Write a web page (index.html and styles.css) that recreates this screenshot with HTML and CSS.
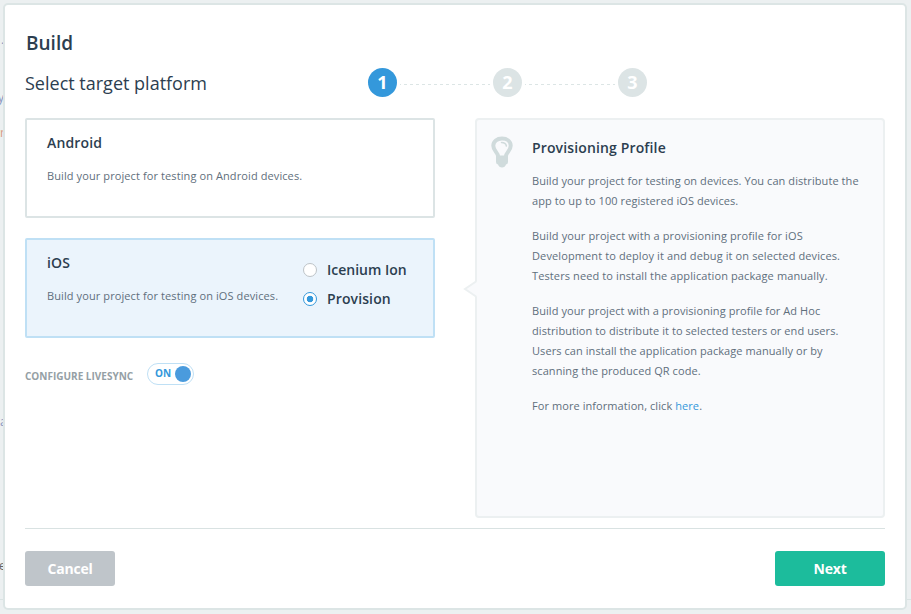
FILE: index.html
```html
<!DOCTYPE html>
<html lang="en">
<head>
<meta charset="utf-8">
<title>Build</title>
<link rel="stylesheet" href="styles.css">
</head>
<body>
<div class="backdrop" aria-hidden="true">
  <span class="peek peek-dot">.</span>
  <span class="peek peek-y">y</span>
  <span class="peek peek-r">r</span>
  <span class="peek peek-a">a</span>
  <span class="peek peek-e">e</span>
</div>
<main class="dialog">
  <h1 class="title">Build</h1>
  <header class="wizard">
    <h2 class="subtitle">Select target platform</h2>
    <div class="steps">
      <span class="step active">1</span>
      <svg class="track" width="90" height="1"><path d="M0 .5H90"/></svg>
      <span class="step">2</span>
      <svg class="track" width="90" height="1"><path d="M0 .5H90"/></svg>
      <span class="step">3</span>
    </div>
  </header>
  <div class="columns">
    <section class="platforms">
      <div class="card">
        <div class="card-text">
          <h3>Android</h3>
          <p>Build your project for testing on Android devices.</p>
        </div>
      </div>
      <div class="card selected">
        <div class="card-text">
          <h3>iOS</h3>
          <p>Build your project for testing on iOS devices.</p>
        </div>
        <div class="options">
          <div class="option"><span class="radio"></span><span>Icenium Ion</span></div>
          <div class="option"><span class="radio checked"></span><span class="provision">Provision</span></div>
        </div>
      </div>
      <div class="livesync">
        <span class="livesync-label">CONFIGURE LIVESYNC</span>
        <span class="toggle"><span class="toggle-text">ON</span><span class="knob"></span></span>
      </div>
    </section>
    <aside class="info">
      <svg class="arrow" width="14" height="18" viewBox="0 0 14 18"><path class="arrow-fill" d="M14 1.5L2 9l12 7.5z"/><path class="arrow-line" d="M13 1.5L2 9l11 7.5"/></svg>
      <svg class="bulb" width="22" height="32" viewBox="0 0 22 32">
        <path class="glass" d="M7 20C6.800 16.500 2.300 14.700 2.300 9.800C2.300 5.400 6 2.500 11 2.500s8.700 2.900 8.700 7.300c0 4.900-4.500 6.700-4.700 10.200"/>
        <path class="base" d="M5 19.500h12v6.500q0 2-2 2.500-1 3-4 3t-4-3q-2-.5-2-2.500z"/>
        <path class="shine" d="M10.500 6.600q4.200 0 4.900 3.400"/>
      </svg>
      <div class="info-body">
        <h3>Provisioning Profile</h3>
        <p>Build your project for testing on devices. You can distribute the<br>app to up to 100 registered iOS devices.</p>
        <p class="loose">Build your project with a provisioning profile for iOS<br>Development to deploy it and debug it on selected devices.<br>Testers need to install the application package manually.</p>
        <p>Build your project with a provisioning profile for Ad Hoc<br>distribution to distribute it to selected testers or end users.<br>Users can install the application package manually or by<br>scanning the produced QR code.</p>
        <p>For more information, click <a>here</a>.</p>
      </div>
    </aside>
  </div>
  <footer class="actions">
    <button class="btn cancel">Cancel</button>
    <button class="btn next">Next</button>
  </footer>
</main>
</body>
</html>
```
FILE: styles.css
```css
* { box-sizing: border-box; }
body {
  margin: 0;
  height: 614px;
  padding: 3px;
  overflow: hidden;
  background: #ecf0f1;
  font-family: "Open Sans", sans-serif;
  color: #2c3e50;
}
h1, h2, h3, p { margin: 0; }
.backdrop {
  position: absolute;
  inset: 0;
  overflow: hidden;
}
.backdrop::after {
  content: "";
  position: absolute;
  left: 0;
  right: 0;
  top: 599px;
  height: 1px;
  background: #dae3e3;
}
.peek {
  position: absolute;
  font-size: 12px;
  line-height: 16px;
  color: #8795c0;
}
.peek-dot { top: 32px; left: 1px; }
.peek-y { top: 90px; left: -2px; }
.peek-r { top: 125px; left: 0; color: #d99a80; }
.peek-a { top: 414px; left: 0; }
.peek-e { top: 558px; left: -1px; color: #666; }
.dialog {
  position: relative;
  width: 904px;
  height: 607px;
  padding: 25px 20px 0;
  background: #fff;
  border: 2px solid #dce5e5;
  border-radius: 5px;
}
.title {
  padding-left: 1px;
  font-size: 19px;
  font-weight: 600;
  line-height: 26px;
}
.wizard {
  display: flex;
  align-items: flex-start;
  height: 62px;
  padding-top: 12px;
}
.subtitle {
  width: 343px;
  font-size: 18px;
  font-weight: 400;
  line-height: 30px;
  white-space: nowrap;
}
.steps {
  display: flex;
  align-items: center;
  gap: 3px;
}
.step {
  width: 29px;
  height: 29px;
  border-radius: 50%;
  background: #dce4e5;
  color: #fff;
  font-size: 18px;
  font-weight: 700;
  line-height: 29px;
  text-align: center;
}
.step.active { background: #3498db; }
.track { margin-top: 4px; }
.track path {
  stroke: #dce5e5;
  stroke-dasharray: 3 3;
  stroke-dashoffset: 2;
}
.columns {
  display: flex;
  gap: 40px;
  height: 410px;
}
.platforms { width: 410px; }
.card {
  display: flex;
  height: 100px;
  margin-bottom: 20px;
  padding: 12px 20px;
  border: 2px solid #dce4e5;
  border-radius: 2px;
}
.card.selected {
  background: #ebf4fc;
  border-color: #bfe0f5;
}
.card-text {
  flex: none;
  width: 256px;
  padding-top: 1px;
}
h3 {
  font-size: 14px;
  font-weight: 600;
  line-height: 20px;
  letter-spacing: .14px;
}
p {
  font-size: 11px;
  line-height: 20px;
  letter-spacing: .075px;
  color: #5f6f7c;
  white-space: nowrap;
}
p.loose { letter-spacing: .11px; }
.card p {
  margin-top: 13px;
  letter-spacing: .1px;
}
.options { padding-top: 3px; }
.option {
  display: flex;
  align-items: center;
  gap: 10px;
  height: 29px;
  font-size: 14px;
  font-weight: 600;
  white-space: nowrap;
}
.provision { letter-spacing: .12px; }
.radio {
  width: 14px;
  height: 14px;
  border: 1px solid #bdc3c7;
  border-radius: 50%;
  background: #fff;
}
.radio.checked {
  border-color: #3498db;
  background: radial-gradient(circle, #3498db 3px, #fff 3.600px);
}
.livesync {
  display: flex;
  align-items: center;
  padding-top: 5px;
}
.livesync-label {
  width: 122px;
  padding-top: 4px;
  font-size: 10px;
  font-weight: 700;
  line-height: 14px;
  color: #95a0a5;
  white-space: nowrap;
}
.toggle {
  display: flex;
  align-items: center;
  justify-content: space-between;
  width: 47px;
  height: 22px;
  padding: 0 2px 0 7px;
  border: 1px solid #bfe0f5;
  border-radius: 11px;
  font-size: 10px;
  font-weight: 700;
  color: #3498db;
}
.toggle-text { padding-bottom: 2px; }
.knob {
  width: 16px;
  height: 16px;
  border-radius: 50%;
  background: #4a9bdd;
}
.info {
  position: relative;
  display: flex;
  gap: 19px;
  width: 410px;
  height: 400px;
  padding: 16px 14px;
  background: #f9fafc;
  border: 2px solid #ecf0f1;
  border-radius: 4px;
}
.arrow {
  position: absolute;
  left: -14px;
  top: 160px;
}
.arrow-fill { fill: #f9fafc; }
.arrow-line { fill: none; stroke: #ecf0f1; stroke-width: 2; }
.bulb { flex: none; }
.glass { fill: #f9fafc; stroke: #d0dbdc; stroke-width: 4; }
.base { fill: #d0dbdc; }
.shine { fill: none; stroke: #d0dbdc; stroke-width: 1.500; stroke-linecap: round; }
.info-body { padding-top: 2px; }
.info-body h3 { margin-bottom: 13px; }
.info-body p { margin-bottom: 15px; }
.info a { color: #3498db; }
.actions {
  display: flex;
  justify-content: space-between;
  padding-top: 22px;
  border-top: 1px solid #d9e2e2;
}
.btn {
  height: 35px;
  padding: 0;
  border: 0;
  border-radius: 3px;
  font: 700 14px/35px "Open Sans", sans-serif;
  letter-spacing: -.2px;
  color: #fff;
}
.cancel { width: 90px; background: #bfc5ca; }
.next { width: 110px; background: #1cbc9c; }
```
